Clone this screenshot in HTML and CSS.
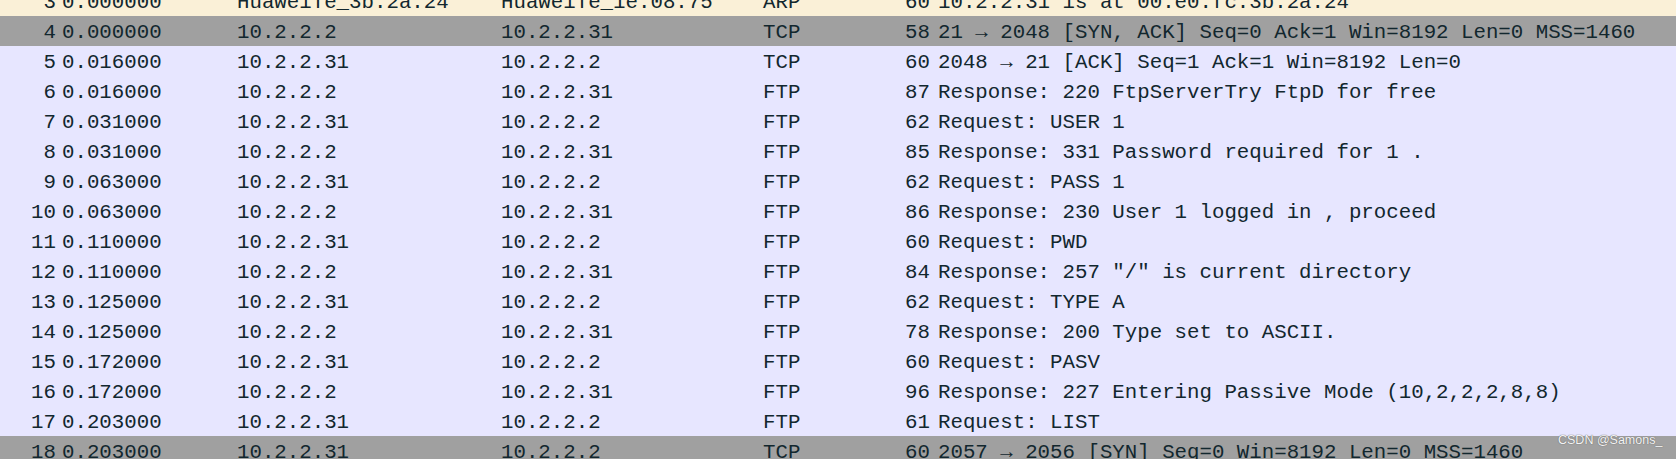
FILE: index.html
```html
<!DOCTYPE html>
<html lang="en">
<head>
<meta charset="utf-8">
<title>Packet list</title>
<link rel="stylesheet" href="styles.css">
</head>
<body>
<div class="list">
  <div class="row arp"><span class="no">3</span><span class="time">0.000000</span><span class="src">HuaweiTe_3b:2a:24</span><span class="dst">HuaweiTe_1e:08:75</span><span class="proto">ARP</span><span class="len">60</span><span class="info">10.2.2.31 is at 00:e0:fc:3b:2a:24</span></div>
  <div class="row syn"><span class="no">4</span><span class="time">0.000000</span><span class="src">10.2.2.2</span><span class="dst">10.2.2.31</span><span class="proto">TCP</span><span class="len">58</span><span class="info">21 → 2048 [SYN, ACK] Seq=0 Ack=1 Win=8192 Len=0 MSS=1460</span></div>
  <div class="row tcp"><span class="no">5</span><span class="time">0.016000</span><span class="src">10.2.2.31</span><span class="dst">10.2.2.2</span><span class="proto">TCP</span><span class="len">60</span><span class="info">2048 → 21 [ACK] Seq=1 Ack=1 Win=8192 Len=0</span></div>
  <div class="row tcp"><span class="no">6</span><span class="time">0.016000</span><span class="src">10.2.2.2</span><span class="dst">10.2.2.31</span><span class="proto">FTP</span><span class="len">87</span><span class="info">Response: 220 FtpServerTry FtpD for free</span></div>
  <div class="row tcp"><span class="no">7</span><span class="time">0.031000</span><span class="src">10.2.2.31</span><span class="dst">10.2.2.2</span><span class="proto">FTP</span><span class="len">62</span><span class="info">Request: USER 1</span></div>
  <div class="row tcp"><span class="no">8</span><span class="time">0.031000</span><span class="src">10.2.2.2</span><span class="dst">10.2.2.31</span><span class="proto">FTP</span><span class="len">85</span><span class="info">Response: 331 Password required for 1 .</span></div>
  <div class="row tcp"><span class="no">9</span><span class="time">0.063000</span><span class="src">10.2.2.31</span><span class="dst">10.2.2.2</span><span class="proto">FTP</span><span class="len">62</span><span class="info">Request: PASS 1</span></div>
  <div class="row tcp"><span class="no">10</span><span class="time">0.063000</span><span class="src">10.2.2.2</span><span class="dst">10.2.2.31</span><span class="proto">FTP</span><span class="len">86</span><span class="info">Response: 230 User 1 logged in , proceed</span></div>
  <div class="row tcp"><span class="no">11</span><span class="time">0.110000</span><span class="src">10.2.2.31</span><span class="dst">10.2.2.2</span><span class="proto">FTP</span><span class="len">60</span><span class="info">Request: PWD</span></div>
  <div class="row tcp"><span class="no">12</span><span class="time">0.110000</span><span class="src">10.2.2.2</span><span class="dst">10.2.2.31</span><span class="proto">FTP</span><span class="len">84</span><span class="info">Response: 257 "/" is current directory</span></div>
  <div class="row tcp"><span class="no">13</span><span class="time">0.125000</span><span class="src">10.2.2.31</span><span class="dst">10.2.2.2</span><span class="proto">FTP</span><span class="len">62</span><span class="info">Request: TYPE A</span></div>
  <div class="row tcp"><span class="no">14</span><span class="time">0.125000</span><span class="src">10.2.2.2</span><span class="dst">10.2.2.31</span><span class="proto">FTP</span><span class="len">78</span><span class="info">Response: 200 Type set to ASCII.</span></div>
  <div class="row tcp"><span class="no">15</span><span class="time">0.172000</span><span class="src">10.2.2.31</span><span class="dst">10.2.2.2</span><span class="proto">FTP</span><span class="len">60</span><span class="info">Request: PASV</span></div>
  <div class="row tcp"><span class="no">16</span><span class="time">0.172000</span><span class="src">10.2.2.2</span><span class="dst">10.2.2.31</span><span class="proto">FTP</span><span class="len">96</span><span class="info">Response: 227 Entering Passive Mode (10,2,2,2,8,8)</span></div>
  <div class="row tcp"><span class="no">17</span><span class="time">0.203000</span><span class="src">10.2.2.31</span><span class="dst">10.2.2.2</span><span class="proto">FTP</span><span class="len">61</span><span class="info">Request: LIST</span></div>
  <div class="row syn"><span class="no">18</span><span class="time">0.203000</span><span class="src">10.2.2.31</span><span class="dst">10.2.2.2</span><span class="proto">TCP</span><span class="len">60</span><span class="info">2057 → 2056 [SYN] Seq=0 Win=8192 Len=0 MSS=1460</span></div>
</div>
<div class="watermark">CSDN @Samons_</div>
</body>
</html>
```

FILE: styles.css
```css
html, body {
  margin: 0;
  padding: 0;
  width: 1676px;
  height: 459px;
  overflow: hidden;
  background: #e7e6ff;
  position: relative;
}

.list {
  margin-top: -14px;
  font-family: "Liberation Mono", "DejaVu Sans Mono", monospace;
  font-size: 20.75px;
  color: #12272e;
}

.row {
  display: grid;
  grid-template-columns: 56px 181px 264px 262px 135px 32px 1fr;
  height: 30px;
  box-sizing: border-box;
  padding-top: 3px;
  line-height: 27px;
  white-space: pre;
  overflow: hidden;
}

.row.arp { background: #faf0d7; }
.row.syn { background: #a0a0a0; }
.row.tcp { background: #e7e6ff; }

.no { text-align: right; }
.time { padding-left: 6px; }
.len { text-align: right; }
.info { padding-left: 8px; }

.watermark {
  position: absolute;
  left: 1558px;
  top: 433px;
  font-family: "Liberation Sans", Arial, sans-serif;
  font-size: 12.5px;
  color: #f4f4f4;
  text-shadow: 0 0 1px #707070, 0 0 1px #707070;
  white-space: nowrap;
}
```
